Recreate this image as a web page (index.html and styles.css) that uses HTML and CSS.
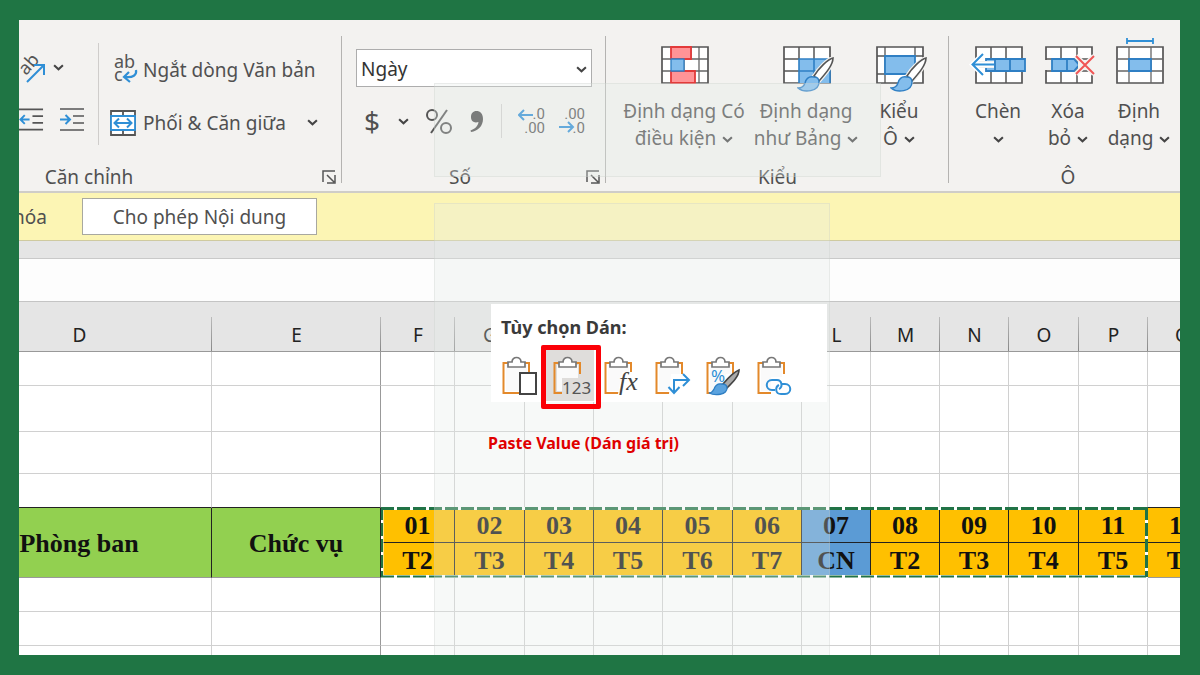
FILE: index.html
```html
<!DOCTYPE html>
<html lang="vi">
<head>
<meta charset="utf-8">
<title>Paste Value</title>
<link rel="stylesheet" href="styles.css">
</head>
<body>
<svg class="defs" aria-hidden="true">
  <symbol id="chevron" viewBox="0 0 10 6"><path d="M1 1l4 3.6L9 1" fill="none" stroke="#444" stroke-width="1.9"/></symbol>
  <symbol id="launcher" viewBox="0 0 15 15"><path d="M1 12V1h12M5 5l7 7M13 5v8H5" fill="none" stroke="#555" stroke-width="1.5"/></symbol>
  <symbol id="brush" viewBox="0 0 38 36">
    <path d="M36 1C31 2 22 11 17 19l5 5C29 16 36 8 36 1z" fill="#fff" stroke="#f3f2f0" stroke-width="4"/>
    <path d="M36 1C31 2 22 11 17 19l5 5C29 16 36 8 36 1z" fill="#fff" stroke="#555" stroke-width="1.6"/>
    <path d="M17 20c-5-1-8 2-9 6-1 3-3 5-7 5 6 5 21 4 21-6 0-3-2-5-5-5z" fill="#83bdec" stroke="#2f7fc4" stroke-width="1.4"/>
  </symbol>
  <symbol id="clipboard" viewBox="0 0 38 42">
    <path d="M6 7H1.500v30H18M22 7h5v11" fill="none" stroke="#e3892b" stroke-width="2"/>
    <path d="M4 9h21v26H4z" fill="#fafafa"/>
    <path d="M6 11V6h4c0-6 9-6 9 0h4v5z" fill="#fff" stroke="#777" stroke-width="1.700"/>
  </symbol>
</svg>
<main class="app">
  <header class="ribbon">
    <section class="group group-align">
      <div class="group-body align-body">
        <div class="align-left">
          <button class="tool orient" aria-label="Hướng">
            <svg width="32" height="34" viewBox="0 0 32 34"><text x="0" y="0" transform="translate(7 25) rotate(-48)" class="ab-rot">ab</text><path d="M8 31L24 15M15 14h10v10" fill="none" stroke="#2f8fd6" stroke-width="2"/></svg>
            <svg class="chev"><use href="#chevron"/></svg>
          </button>
          <div class="indents">
            <button class="tool" aria-label="Giảm thụt lề"><svg width="26" height="26" viewBox="0 0 26 26"><path d="M0 3h25M14 10h11M14 17h11M0 24h25" stroke="#555" stroke-width="1.700"/><path d="M11 13.500H2M6 9l-4.500 4.500L6 18" fill="none" stroke="#2f8fd6" stroke-width="2"/></svg></button>
            <button class="tool" aria-label="Tăng thụt lề"><svg width="26" height="26" viewBox="0 0 26 26"><path d="M1 3h24M14 10h11M14 17h11M1 24h24" stroke="#555" stroke-width="1.700"/><path d="M1 13.500h9M6.500 9l4.500 4.500L6.500 18" fill="none" stroke="#2f8fd6" stroke-width="2"/></svg></button>
          </div>
        </div>
        <div class="align-right">
          <button class="tool wide"><svg width="28" height="30" viewBox="0 0 28 30"><text x="5" y="13" class="ab">ab</text><text x="5" y="26" class="ab">c</text><path d="M27 15c1 5-3 8-11 7M20 17l-5 5 6 5" fill="none" stroke="#2f8fd6" stroke-width="2.200"/></svg><span>Ngắt dòng Văn bản</span></button>
          <button class="tool wide"><svg width="28" height="28" viewBox="0 0 28 28"><path d="M2 2h24v24H2zM14 2v5M14 21v5" fill="#fff" stroke="#555" stroke-width="1.800"/><path d="M2 7h24v14H2z" fill="#fff" stroke="#2f8fd6" stroke-width="1.800"/><path d="M6 14h16M10 9.500L5.500 14l4.500 4.500M18 9.500l4.500 4.500-4.500 4.500" fill="none" stroke="#2f8fd6" stroke-width="2"/></svg><span>Phối &amp; Căn giữa</span><svg class="chev push"><use href="#chevron"/></svg></button>
        </div>
      </div>
      <h2 class="group-name name-align">Căn chỉnh</h2>
      <button class="launch" aria-label="Thiết đặt Căn chỉnh"><svg><use href="#launcher"/></svg></button>
    </section>

    <section class="group group-number">
      <div class="group-body number-body">
        <div class="select-wrap"><select class="format" aria-label="Định dạng số"><option>Ngày</option></select><svg class="chev"><use href="#chevron"/></svg></div>
        <div class="number-tools">
          <button class="tool dollar">$</button>
          <button class="tool" aria-label="Tiền tệ khác"><svg class="chev"><use href="#chevron"/></svg></button>
          <button class="tool" aria-label="Phần trăm"><svg width="28" height="28" viewBox="0 0 28 28"><g fill="none" stroke="#555" stroke-width="2"><circle cx="7" cy="8" r="5"/><circle cx="21" cy="21" r="5"/><path d="M22 3L6 26"/></g></svg></button>
          <button class="tool" aria-label="Dấu phẩy"><svg width="16" height="26" viewBox="0 0 16 26"><path d="M7.500 3C11 3 14 5.500 14 11c0 7-5 12-12 13l-.5-1.500C6 21 9 18 9.500 14 5 15.500 2 13 2 9c0-3.500 2-6 5.500-6z" fill="#4c4c4c"/></svg></button>
          <i class="mini-rule"></i>
          <button class="tool" aria-label="Tăng thập phân"><svg width="28" height="30" viewBox="0 0 28 30"><text x="27" y="13" class="dec">.0</text><text x="27" y="27" class="dec">.00</text><path d="M15 9H1M6 4L1 9l5 5" fill="none" stroke="#2f8fd6" stroke-width="2"/></svg></button>
          <button class="tool" aria-label="Giảm thập phân"><svg width="28" height="30" viewBox="0 0 28 30"><text x="27" y="13" class="dec">.00</text><text x="27" y="27" class="dec">.0</text><path d="M1 21h13M10 16l5 5-5 5" fill="none" stroke="#2f8fd6" stroke-width="2"/></svg></button>
        </div>
      </div>
      <h2 class="group-name name-number">Số</h2>
      <button class="launch" aria-label="Thiết đặt Số"><svg><use href="#launcher"/></svg></button>
    </section>

    <section class="group group-style">
      <div class="group-body big-body">
        <button class="big big-cond"><svg viewBox="0 0 60 56"><path d="M8 9h46v36H8z" fill="#fff"/><path d="M45 9v36M37 9v12M8 21h46M8 33h46M30 21v12" stroke="#666" stroke-width="1.300"/><path d="M8 9h46v36H8z" fill="none" stroke="#555" stroke-width="1.700"/><path d="M17 9h20v12H17zM17 33h24v12H17z" fill="#ff9497" stroke="#e33a3a" stroke-width="1.800"/><path d="M17 21h13v12H17z" fill="#83bdec" stroke="#2f7fc4" stroke-width="1.300"/></svg><span>Định dạng Có<br>điều kiện <svg class="chev"><use href="#chevron"/></svg></span></button>
        <button class="big big-table"><svg viewBox="0 0 60 56"><path d="M8 9h46v36H8z" fill="#fff" stroke="#555" stroke-width="1.700"/><path d="M23 21h31v24H23z" fill="#83bdec"/><path d="M23 9v12M38 9v12M8 21h15M8 33h15" stroke="#555" stroke-width="1.500"/><path d="M23 45V21h31v24M38 21v24M23 33h31" fill="none" stroke="#2f7fc4" stroke-width="1.600"/><use href="#brush" x="21" y="19" width="38" height="36"/></svg><span>Định dạng<br>như Bảng <svg class="chev"><use href="#chevron"/></svg></span></button>
        <button class="big big-cell"><svg viewBox="0 0 60 56"><path d="M8 9h46v36H8z" fill="#fff" stroke="#555" stroke-width="1.700"/><path d="M16 9v36M46 9v10M8 18h46M8 36h30" stroke="#555" stroke-width="1.300"/><path d="M16 18h30v18H16z" fill="#83bdec" stroke="#2f7fc4" stroke-width="1.800"/><use href="#brush" x="21" y="19" width="38" height="36"/></svg><span>Kiểu<br>Ô <svg class="chev"><use href="#chevron"/></svg></span></button>
      </div>
      <h2 class="group-name">Kiểu</h2>
    </section>

    <section class="group group-cells">
      <div class="group-body big-body">
        <button class="big big-insert"><svg viewBox="0 0 60 56"><path d="M8 9h46v36H8z" fill="#fff" stroke="#555" stroke-width="1.700"/><path d="M23 9v36M38 9v36" stroke="#555" stroke-width="1.500"/><path d="M18 21h39v12H18z" fill="#83bdec" stroke="#2f7fc4" stroke-width="1.800"/><path d="M42 21v12M27 21v12" stroke="#2f7fc4" stroke-width="1.800"/><path d="M3 23h23v7H3z" fill="#f3f2f0"/><path d="M26 26.500H5M15 16L4.500 26.500 15 37" fill="none" stroke="#fff" stroke-width="5"/><path d="M26 26.500H5M15 16L4.500 26.500 15 37" fill="none" stroke="#2f8fd6" stroke-width="2"/></svg><span>Chèn<br><svg class="chev"><use href="#chevron"/></svg></span></button>
        <button class="big big-delete"><svg viewBox="0 0 60 56"><path d="M8 9h46v36H8z" fill="#fff" stroke="#555" stroke-width="1.700"/><path d="M23 9v36M39 9v36M8 21h46M8 33h46" stroke="#555" stroke-width="1.500"/><path d="M5 22h9v10H5z" fill="#f3f2f0"/><path d="M14 21h22l5 6-5 6H14z" fill="#83bdec" stroke="#2f7fc4" stroke-width="1.800"/><path d="M29 21v12" stroke="#2f7fc4" stroke-width="1.800"/><path d="M40 22h17v10H40z" fill="#f3f2f0"/><path d="M38 18l18 18M56 18L38 36" stroke="#f3f2f0" stroke-width="5"/><path d="M38 18l18 18M56 18L38 36" stroke="#f05656" stroke-width="2"/></svg><span>Xóa<br>bỏ <svg class="chev"><use href="#chevron"/></svg></span></button>
        <button class="big big-format"><svg viewBox="0 0 60 56"><path d="M8 9h46v36H8z" fill="#fff" stroke="#555" stroke-width="1.700"/><path d="M20 9v36M42 9v36M8 21h46M8 33h46" stroke="#666" stroke-width="1.300"/><path d="M20 21h22v12H20z" fill="#83bdec" stroke="#2f7fc4" stroke-width="1.800"/><path d="M18 3h26M18 0v6M44 0v6" stroke="#2f8fd6" stroke-width="1.800"/></svg><span>Định<br>dạng <svg class="chev"><use href="#chevron"/></svg></span></button>
      </div>
      <h2 class="group-name name-cells">Ô</h2>
    </section>
  </header>

  <div class="notice"><span class="notice-text"><span>khóa</span></span><button class="enable">Cho phép Nội dung</button></div>
  <div class="gutter"></div>
  <div class="formula"></div>

  <div class="sheet">
    <table class="grid">
      <colgroup><col class="c-d"><col class="c-e"><col class="c-f"><col class="c-a"><col class="c-b"><col class="c-b"><col class="c-a"><col class="c-b"><col class="c-b"><col class="c-b"><col class="c-b"><col class="c-a"><col class="c-b"><col class="c-b"></colgroup>
      <thead><tr><th>D</th><th class="freeze">E</th><th>F</th><th>G</th><th>H</th><th>I</th><th>J</th><th>K</th><th>L</th><th>M</th><th>N</th><th>O</th><th>P</th><th>Q</th></tr></thead>
      <tbody>
        <tr class="r34"><td></td><td class="freeze"></td><td></td><td></td><td></td><td></td><td></td><td></td><td></td><td></td><td></td><td></td><td></td><td></td></tr>
        <tr class="r46"><td></td><td class="freeze"></td><td></td><td></td><td></td><td></td><td></td><td></td><td></td><td></td><td></td><td></td><td></td><td></td></tr>
        <tr class="r42"><td></td><td class="freeze"></td><td></td><td></td><td></td><td></td><td></td><td></td><td></td><td></td><td></td><td></td><td></td><td></td></tr>
        <tr class="r34 above"><td></td><td class="freeze"></td><td></td><td></td><td></td><td></td><td></td><td></td><td></td><td></td><td></td><td></td><td></td><td></td></tr>
        <tr class="days"><td class="field" rowspan="2">Phòng ban</td><td class="field freeze" rowspan="2">Chức vụ</td><td>01</td><td>02</td><td>03</td><td>04</td><td>05</td><td>06</td><td class="sun">07</td><td>08</td><td>09</td><td>10</td><td>11</td><td>12</td></tr>
        <tr class="days names"><td>T2</td><td>T3</td><td>T4</td><td>T5</td><td>T6</td><td>T7</td><td class="sun">CN</td><td>T2</td><td>T3</td><td>T4</td><td>T5</td><td>T6</td></tr>
        <tr class="r34"><td></td><td class="freeze"></td><td></td><td></td><td></td><td></td><td></td><td></td><td></td><td></td><td></td><td></td><td></td><td></td></tr>
        <tr class="r34"><td></td><td class="freeze"></td><td></td><td></td><td></td><td></td><td></td><td></td><td></td><td></td><td></td><td></td><td></td><td></td></tr>
        <tr class="r34"><td></td><td class="freeze"></td><td></td><td></td><td></td><td></td><td></td><td></td><td></td><td></td><td></td><td></td><td></td><td></td></tr>
      </tbody>
    </table>
    <svg class="ants" viewBox="0 0 767 71"><path d="M0 1.500h767M765.500 0v70M0 69.500h767M1 0v70" stroke="#fff" stroke-width="3"/><g stroke="#217346"><path d="M0 1.500h767M765.500 0v70" stroke-width="3" stroke-dasharray="13 3"/><path d="M0 69.500h767M1 0v70" stroke-width="2" stroke-dasharray="13 3"/></g></svg>
  </div>

  <div class="veil veil-top"></div>
  <div class="veil veil-main"></div>

  <section class="paste">
    <h3>Tùy chọn Dán:</h3>
    <div class="paste-row">
      <button aria-label="Dán"><svg viewBox="0 0 38 42"><use href="#clipboard"/><path d="M18 17h16v21H18z" fill="#fff" stroke="#444" stroke-width="2"/></svg></button>
      <button class="chosen" aria-label="Giá trị"><svg viewBox="0 0 38 42"><use href="#clipboard"/><path d="M9 22h28v16H9z" fill="#dfdddb"/><text x="9" y="38" class="num">123</text></svg></button>
      <button aria-label="Công thức"><svg viewBox="0 0 38 42"><use href="#clipboard"/><path d="M18 16h10v22H14z" fill="#fff"/><text x="15" y="34" class="fx">fx</text></svg></button>
      <button aria-label="Chuyển vị"><svg viewBox="0 0 38 42"><use href="#clipboard"/><path d="M16 18h14v20H14z" fill="#fff"/><path d="M19 37V24h14M13.500 31l5.500 6 5.500-6M28 18l6 6-6 6" fill="none" stroke="#2f8fd6" stroke-width="2"/></svg></button>
      <button aria-label="Định dạng"><svg viewBox="0 0 38 42"><use href="#clipboard"/><path d="M20 18h9v18H16z" fill="#fff"/><text x="5" y="26" class="pct">%</text><path d="M33 14c-5 2-11 8-16 14l4 4c6-6 12-12 12-18z" fill="#aaa" stroke="#444" stroke-width="1.600"/><path d="M16 28c-5-1-7 2-8 5-1 2-3 4-5 4 6 3 18 2 18-5 0-3-2-4-5-4z" fill="#5ba3df" stroke="#2f7fc4" stroke-width="1.300"/></svg></button>
      <button aria-label="Dán nối kết"><svg viewBox="0 0 38 42"><use href="#clipboard"/><path d="M14 21h20v17H14z" fill="#fff"/><g fill="none" stroke="#2f8fd6" stroke-width="2"><path d="M18 34h-3c-7 0-7-10 0-10h5c5 0 6 7 2 9"/><path d="M25 28h3c7 0 7 10 0 10h-4c-6 0-6-7-2-9"/></g></svg></button>
    </div>
  </section>
  <p class="caption">Paste Value (Dán giá trị)</p>
</main>
</body>
</html>
```
FILE: styles.css
```css
* { box-sizing: border-box; }
body {
  margin: 0;
  height: 100vh;
  padding: 20px 20px 20px 19px;
  background: #1f7544;
  font-family: "Noto Sans", "Open Sans", sans-serif;
  font-size: 19px;
  color: #505050;
}
button {
  font: inherit;
  color: inherit;
  background: none;
  border: 0;
  padding: 0;
  display: flex;
  align-items: center;
}
h2, h3, p { margin: 0; font-weight: 400; font-size: inherit; }
.defs { position: absolute; width: 0; height: 0; }
.chev { width: 11px; height: 7px; flex: none; }

.app {
  position: relative;
  height: 100%;
  overflow: hidden;
  background: #fff;
  display: flex;
  flex-direction: column;
}

/* Ribbon */
.ribbon {
  flex: none;
  display: flex;
  background: #f3f2f0;
  border-bottom: 2px solid #cfcdc8;
  height: 173px;
}
.group {
  flex: none;
  position: relative;
  display: flex;
  flex-direction: column;
}
.group:not(:last-child)::after {
  content: "";
  position: absolute;
  right: 0;
  top: 16px;
  bottom: 8px;
  width: 1px;
  background: #b4b3b1;
}
.group-align { width: 323px; }
.group-number { width: 264px; }
.group-style { width: 343px; }
.group-cells { flex: 1 0 231px; }
.group-body { height: 143px; }
.group-name { text-align: center; line-height: 28px; }
.name-align { padding-right: 183px; }
.name-number { padding-right: 28px; }
.name-cells { width: 238px; }
.launch { position: absolute; right: 5px; bottom: 6px; }
.launch svg { width: 15px; height: 15px; }

.align-body { display: flex; padding-top: 23px; }
.align-left {
  width: 80px;
  height: 102px;
  border-right: 1px solid #cfcdcb;
  display: flex;
  flex-direction: column;
}
.orient { height: 50px; gap: 2px; }
.orient svg { overflow: visible; }
.ab-rot, .ab { font-size: 18px; fill: #555; }
.indents { display: flex; gap: 15px; height: 54px; align-items: center; }
.align-left .indents .tool:first-child { width: 25px; }
.align-right { padding-left: 10px; display: flex; flex-direction: column; }
.wide { height: 53px; gap: 6px; }
.wide svg { overflow: visible; }
.push { margin-left: 15px; }

.number-body { padding: 29px 14px 0 14px; }
.select-wrap { position: relative; height: 38px; }
.format {
  appearance: none;
  width: 100%;
  height: 100%;
  padding: 2px 4px 0;
  border: 1px solid #adadad;
  border-radius: 0;
  background: #fff;
  font: inherit;
  color: #333;
}
.select-wrap .chev { position: absolute; right: 5px; top: 17px; }
.number-tools {
  display: flex;
  align-items: center;
  height: 68px;
  gap: 16px;
  padding-left: 8px;
}
.dollar { font-size: 28px; width: 18px; }
.mini-rule { width: 1px; height: 34px; background: #d0cfcd; }
.number-tools .tool:last-child { margin-left: -4px; }
.dec { font: 15px Roboto, sans-serif; text-anchor: end; fill: #555; }

.big-body { display: flex; padding-top: 18px; }
.big { flex-direction: column; align-items: center; line-height: 27px; text-align: center; }
.big > svg { width: 60px; height: 56px; flex: none; overflow: visible; }
.big span { white-space: nowrap; margin-top: 4px; }
.big .chev { vertical-align: 2px; margin-left: 1px; }
.group-style .big-body { padding-left: 15px; }
.big-cond { width: 126px; }
.big-table { width: 118px; }
.big-cell { width: 68px; }
.group-cells .big-body { padding-left: 12px; }
.big-insert { width: 74px; }
.big-delete { width: 66px; }
.big-format { width: 76px; }

/* Message bar */
.notice {
  flex: none;
  height: 48px;
  display: flex;
  align-items: center;
  gap: 35px;
  background: #fcf5b4;
  border-bottom: 1px solid #cfcaa0;
}
.notice-text { width: 28px; display: flex; justify-content: flex-end; overflow: hidden; }
.enable {
  height: 37px;
  width: 235px;
  justify-content: center;
  white-space: nowrap;
  background: #fff;
  border: 1px solid #a8a8a0;
}
.gutter { flex: none; height: 18px; background: #e5e5e5; border-bottom: 1px solid #c9c9c9; }
.formula { flex: none; height: 43px; background: #fdfdfd; border-bottom: 1px solid #c4c4c4; }

/* Worksheet */
.sheet { position: relative; flex: 1; overflow: hidden; }
.grid {
  table-layout: fixed;
  width: 1270px;
  margin-left: -72px;
  border-collapse: separate;
  border-spacing: 0;
}
.c-d { width: 265px; }
.c-e { width: 169px; }
.c-f { width: 74px; }
.c-a { width: 70px; }
.c-b { width: 69px; }
.grid th {
  height: 50px;
  padding: 17px 0 0;
  font-weight: 400;
  color: #222;
  background: linear-gradient(#bbb, #888) right bottom / 1px 34px no-repeat #e5e5e5;
  border-bottom: 1px solid #999;
}
.grid td { padding: 0; border: 0 solid #d0d0d0; border-width: 0 1px 1px 0; }
.grid td.freeze { border-right-color: #999; }
.r34 { height: 34px; }
.r46 { height: 46px; }
.r42 { height: 42px; }
.grid .above td { border-bottom: 1px solid #222; }
.days { height: 35px; }
.grid .days td {
  font: 700 26px/32px "Liberation Serif", serif;
  padding-top: 2px;
  text-align: center;
  color: #111;
  background: #ffc000;
  border-color: #222;
}
.grid .days td.field { background: #92d050; border-bottom-color: #999; }
.grid .names td { border-bottom-color: #999; }
.grid .days td.sun { background: #5b9bd5; }
.ants { position: absolute; left: 362px; top: 205px; width: 767px; height: 71px; }

/* Translucent panels over the workbook */
.veil {
  position: absolute;
  left: 415px;
  background: rgba(228, 235, 231, 0.3);
  border: 1px solid rgba(190, 195, 192, 0.25);
}
.veil-top { top: 63px; width: 447px; height: 94px; }
.veil-main { top: 183px; bottom: 0; width: 396px; border-bottom: 0; }

/* Paste options */
.paste {
  position: absolute;
  left: 472px;
  top: 284px;
  width: 336px;
  height: 98px;
  background: #fff;
}
.paste h3 { padding-left: 10px; line-height: 46px; font-weight: 700; font-size: 18px; color: #3a3a3a; }
.paste-row { display: flex; gap: 3px; padding-left: 4px; }
.paste-row button { position: relative; width: 48px; height: 51px; padding: 2px 0 0 7px; }
.paste-row svg { width: 38px; height: 42px; flex: none; overflow: visible; }
.paste-row .chosen { background: #dfdddb; }
.chosen::after {
  content: "";
  position: absolute;
  inset: -5px -7px -8px -5px;
  border: 5px solid #fb0007;
  border-radius: 2px;
}
.num { font-size: 17px; fill: #555; }
.fx { font: italic 26px "Liberation Serif", serif; fill: #444; }
.pct { font-size: 17px; fill: #2f8fd6; }
.caption {
  position: absolute;
  left: 469px;
  top: 412px;
  font-size: 16px;
  line-height: 22px;
  font-weight: 700;
  color: #e00000;
  white-space: nowrap;
}
```
